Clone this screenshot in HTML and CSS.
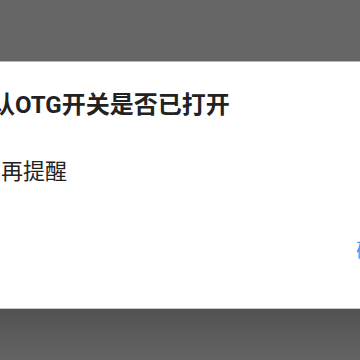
FILE: index.html
```html
<!DOCTYPE html>
<html lang="zh">
<head>
<meta charset="utf-8">
<link rel="stylesheet" href="styles.css">
</head>
<body>
<div class="screen">
  <div class="scrim-top"></div>
  <div class="dialog">
    <div class="title">确认OTG开关是否已打开</div>
    <div class="message">不再提醒</div>
    <div class="actions"><span class="btn">确定</span></div>
  </div>
  <div class="scrim-bottom"></div>
</div>
</body>
</html>
```
FILE: styles.css
```css
html, body {
  margin: 0;
  padding: 0;
  width: 360px;
  height: 360px;
  overflow: hidden;
  background: #666666;
  font-family: Roboto, "Noto Sans CJK SC", sans-serif;
}
.screen {
  display: flex;
  flex-direction: column;
  width: 360px;
  height: 360px;
  overflow: hidden;
}
.scrim-top {
  height: 61px;
  background: #666666;
  border-bottom: 1px solid #b4b4b4;
  flex: none;
}
.dialog {
  height: 246px;
  background: #ffffff;
  flex: none;
  display: flex;
  flex-direction: column;
  overflow: hidden;
}
.title {
  margin: 28px 0 0 -33px;
  font-size: 24px;
  line-height: 30px;
  font-weight: bold;
  color: #222222;
  white-space: nowrap;
}
.message {
  margin: 37px 0 0 -21px;
  font-size: 22px;
  line-height: 30px;
  color: #222222;
  white-space: nowrap;
}
.actions {
  margin-top: 52px;
  display: flex;
  justify-content: flex-end;
  margin-right: -36px;
}
.btn {
  font-size: 20px;
  line-height: 24px;
  color: #4a98f2;
  white-space: nowrap;
}
.scrim-bottom {
  flex: 1;
  border-top: 1px solid #c8c8c8;
  background: linear-gradient(#525252, #646464);
}
```
